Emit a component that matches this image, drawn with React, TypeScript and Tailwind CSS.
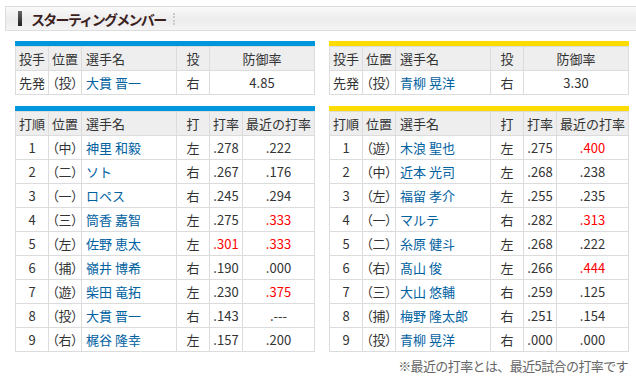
import React from 'react';

type Batter = {
    order: number;
    pos: string;
    name: string;
    hand: string;
    avg: string;
    recent: string;
    avgHot?: boolean;
    recentHot?: boolean;
};

const awayPitcher = { name: '大貫 晋一', hand: '右', era: '4.85' };
const homePitcher = { name: '青柳 晃洋', hand: '右', era: '3.30' };

const awayLineup: Batter[] = [
    { order: 1, pos: '中', name: '神里 和毅', hand: '左', avg: '.278', recent: '.222' },
    { order: 2, pos: '二', name: 'ソト', hand: '右', avg: '.267', recent: '.176' },
    { order: 3, pos: '一', name: 'ロペス', hand: '右', avg: '.245', recent: '.294' },
    { order: 4, pos: '三', name: '筒香 嘉智', hand: '左', avg: '.275', recent: '.333', recentHot: true },
    { order: 5, pos: '左', name: '佐野 恵太', hand: '左', avg: '.301', recent: '.333', avgHot: true, recentHot: true },
    { order: 6, pos: '捕', name: '嶺井 博希', hand: '右', avg: '.190', recent: '.000' },
    { order: 7, pos: '遊', name: '柴田 竜拓', hand: '左', avg: '.230', recent: '.375', recentHot: true },
    { order: 8, pos: '投', name: '大貫 晋一', hand: '右', avg: '.143', recent: '.---' },
    { order: 9, pos: '右', name: '梶谷 隆幸', hand: '左', avg: '.157', recent: '.200' },
];

const homeLineup: Batter[] = [
    { order: 1, pos: '遊', name: '木浪 聖也', hand: '左', avg: '.275', recent: '.400', recentHot: true },
    { order: 2, pos: '中', name: '近本 光司', hand: '左', avg: '.268', recent: '.238' },
    { order: 3, pos: '左', name: '福留 孝介', hand: '左', avg: '.255', recent: '.235' },
    { order: 4, pos: '一', name: 'マルテ', hand: '右', avg: '.282', recent: '.313', recentHot: true },
    { order: 5, pos: '二', name: '糸原 健斗', hand: '左', avg: '.268', recent: '.222' },
    { order: 6, pos: '右', name: '髙山 俊', hand: '左', avg: '.266', recent: '.444', recentHot: true },
    { order: 7, pos: '三', name: '大山 悠輔', hand: '右', avg: '.259', recent: '.125' },
    { order: 8, pos: '捕', name: '梅野 隆太郎', hand: '右', avg: '.251', recent: '.154' },
    { order: 9, pos: '投', name: '青柳 晃洋', hand: '右', avg: '.000', recent: '.000' },
];

const th = 'h-[24px] border border-[#dcdcdc] bg-[#eeeeee] p-0 font-normal';
const td = 'h-[24px] border border-[#dcdcdc] bg-white p-0';
// position cells like "（中）" need proportional brackets to fit in 33px
const posCls = 'h-[24px] border border-[#dcdcdc] bg-white p-0 whitespace-nowrap [font-feature-settings:"palt"]';
const nameCls = 'h-[24px] border border-[#dcdcdc] bg-white p-0 pl-[4px] text-left text-[#00619f]';

const PitcherTable: React.FC<{ bar: string; pitcher: typeof awayPitcher }> = ({ bar, pitcher }) => (
    <div className="w-[300px]">
        <div className={bar} />
        <table className="w-[300px] table-fixed border-collapse text-center">
            <colgroup>
                <col className="w-[33px]" />
                <col className="w-[33px]" />
                <col className="w-[95px]" />
                <col className="w-[33px]" />
                <col />
            </colgroup>
            <thead>
                <tr>
                    <th className={th}>投手</th>
                    <th className={th}>位置</th>
                    <th className={th + ' pl-[4px] text-left'}>選手名</th>
                    <th className={th}>投</th>
                    <th className={th}>防御率</th>
                </tr>
            </thead>
            <tbody>
                <tr>
                    <td className={td}>先発</td>
                    <td className={posCls}>（投）</td>
                    <td className={nameCls}>{pitcher.name}</td>
                    <td className={td}>{pitcher.hand}</td>
                    <td className={td}>{pitcher.era}</td>
                </tr>
            </tbody>
        </table>
    </div>
);

const LineupTable: React.FC<{ bar: string; lineup: Batter[] }> = ({ bar, lineup }) => (
    <div className="w-[300px]">
        <div className={bar} />
        <table className="w-[300px] table-fixed border-collapse text-center">
            <colgroup>
                <col className="w-[33px]" />
                <col className="w-[33px]" />
                <col className="w-[95px]" />
                <col className="w-[33px]" />
                <col className="w-[33px]" />
                <col />
            </colgroup>
            <thead>
                <tr>
                    <th className={th}>打順</th>
                    <th className={th}>位置</th>
                    <th className={th + ' pl-[4px] text-left'}>選手名</th>
                    <th className={th}>打</th>
                    <th className={th}>打率</th>
                    <th className={th}>最近の打率</th>
                </tr>
            </thead>
            <tbody>
                {lineup.map((b) => (
                    <tr key={b.order}>
                        <td className={td}>{b.order}</td>
                        <td className={posCls}>（{b.pos}）</td>
                        <td className={nameCls}>{b.name}</td>
                        <td className={td}>{b.hand}</td>
                        <td className={b.avgHot ? td + ' text-[#ff0000]' : td}>{b.avg}</td>
                        <td className={b.recentHot ? td + ' text-[#ff0000]' : td}>{b.recent}</td>
                    </tr>
                ))}
            </tbody>
        </table>
    </div>
);

export default function App() {
    const blueBar = 'h-[5px] bg-[#0096dc]';
    const yellowBar = 'h-[5px] bg-[#ffdc00]';

    return (
        <div className="h-[390px] w-[636px] overflow-hidden bg-white pt-[6px] font-['Noto_Sans_CJK_JP','Liberation_Sans',sans-serif] text-[13px] leading-none text-[#333333]">
            {/* section title bar */}
            <div className="ml-[5px] flex h-[25px] items-center border border-r-0 border-[#dddddd] bg-[linear-gradient(#fafafa,#ececec_55%,#f4f4f4)] pl-[12px]">
                <div className="h-[15px] w-[4px] bg-[linear-gradient(#666,#222)]" />
                <span className="ml-[9px] text-[14px] font-bold tracking-[-1.7px] text-[#3b1f1f]">スターティングメンバー</span>
                <div className="ml-[8px] h-[12px] border-l-2 border-dotted border-[#cccccc]" />
            </div>

            <div className="mt-[10px] flex gap-[14px] pl-[15px]">
                <PitcherTable bar={blueBar} pitcher={awayPitcher} />
                <PitcherTable bar={yellowBar} pitcher={homePitcher} />
            </div>

            <div className="mt-[11px] flex gap-[14px] pl-[15px]">
                <LineupTable bar={blueBar} lineup={awayLineup} />
                <LineupTable bar={yellowBar} lineup={homeLineup} />
            </div>

            <div className="mt-[7px] w-[628px] text-right text-[13px] tracking-[-0.6px] text-[#666666]">
                ※最近の打率とは、最近5試合の打率です
            </div>
        </div>
    );
}
